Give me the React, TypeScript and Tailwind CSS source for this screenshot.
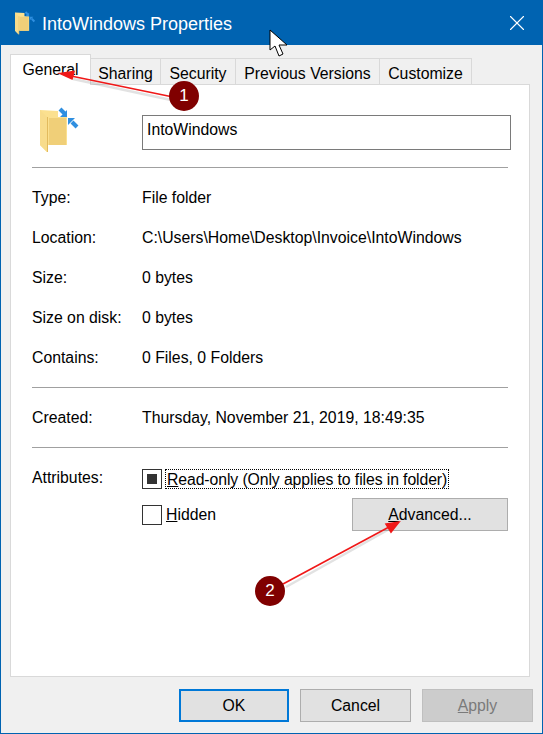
import { X } from "lucide-react";

const info = [
  ["Type:", "File folder"],
  ["Location:", "C:\\Users\\Home\\Desktop\\Invoice\\IntoWindows"],
  ["Size:", "0 bytes"],
  ["Size on disk:", "0 bytes"],
  ["Contains:", "0 Files, 0 Folders"],
];

function FolderIcon({ className }: { className: string }) {
  return (
    <svg viewBox="0 0 40 46" className={className}>
      <path d="M0 3 L18 4 L18 10 L27 10 L27 38 L7 38 L7 45 L0 38 Z" fill="#fbe08f" />
      <path d="M9 11 L26 11 L26 38 L9 38 Z" fill="#f0cf78" />
      <path d="M0 3 L7 10 L7 45 L0 38 Z" fill="#f8dc8c" />
      <path d="M7.5 10 L7.5 45" stroke="#e2bb5e" strokeWidth="1" />
      <path d="M20 2 L25 7" stroke="#2f8fe0" strokeWidth="4" />
      <path d="M27 10 L27 3 L20 10 Z" fill="#2f8fe0" />
      <path d="M32 15 L37 20" stroke="#2f8fe0" strokeWidth="4" />
      <path d="M28 11 L35 11 L28 18 Z" fill="#2f8fe0" />
    </svg>
  );
}

function Row({ label, value }: { label: string; value: string }) {
  return (
    <div className="flex h-10 items-center pt-[2px]">
      <div className="w-[110px]">{label}</div>
      <div>{value}</div>
    </div>
  );
}

function Tab({ label, className }: { label: string; className: string }) {
  return (
    <div className={`flex h-[26px] items-center justify-center border-t border-r border-[#d9d9d9] bg-[#f0f0f0] pt-[5px] ${className}`}>
      {label}
    </div>
  );
}

function Annotations() {
  return (
    <svg className="absolute inset-0 z-20" width="543" height="734" viewBox="0 0 543 734">
      <g stroke="#8a8a8a" strokeOpacity="0.25" fill="none" strokeWidth="2.5">
        <path d="M170 100 L72 79" />
        <path d="M285 587 L392 527" />
      </g>
      <g stroke="#f01818" strokeWidth="1.6" fill="#f01818">
        <path d="M172 97 L70 76" />
        <path d="M59 73.5 L73 71.5 L71 79 Z" />
        <path d="M282 584 L388 527" />
        <path d="M398 522 L390 532 L385 524 Z" />
      </g>
    </svg>
  );
}

function Badge({ n, className }: { n: number; className: string }) {
  return (
    <div className={`absolute z-20 flex size-[30px] items-center justify-center rounded-full bg-[#800000] text-[17px] text-white ${className}`}>
      {n}
    </div>
  );
}

export default function App() {
  return (
    <div
      className="relative flex h-[734px] w-[543px] flex-col overflow-hidden border-x border-b border-[#0063b1] bg-[#f0f0f0] text-[15.8px] text-black"
      style={{ fontFamily: '"Liberation Sans", Arial, sans-serif' }}
    >
      <div className="flex h-[45px] shrink-0 items-center bg-[#0063b1] text-white">
        <FolderIcon className="ml-[14px] h-[24px] w-[21px]" />
        <div className="ml-[6px] pt-[3px] text-[18px]">IntoWindows Properties</div>
        <X className="mr-[12px] ml-auto text-white" size={26} strokeWidth={1} />
      </div>

      <div className="relative z-10 mt-[10px] ml-[9px] flex h-[29px] items-end">
        <div className="-mb-px flex h-[31px] w-[81px] items-center justify-center border-x border-t border-[#d9d9d9] bg-white">
          General
        </div>
        <Tab label="Sharing" className="w-[70px]" />
        <Tab label="Security" className="w-[75px]" />
        <Tab label="Previous Versions" className="w-[144px]" />
        <Tab label="Customize" className="w-[92px]" />
      </div>

      <div className="mr-[12px] ml-[9px] flex h-[593px] flex-col border border-[#d9d9d9] bg-white px-[21px] pt-[30px]">
        <div className="flex h-[34px] items-start">
          <FolderIcon className="mt-[-8px] ml-[8px] h-[46px] w-[40px] shrink-0" />
          <div className="ml-[62px] flex h-[35px] w-[369px] shrink-0 items-center border border-[#7a7a7a] px-1 pb-[5px]">IntoWindows</div>
        </div>
        <div className="mt-[18px] h-px shrink-0 bg-[#a0a0a0]" />
        <div className="mt-[9px]">
          {info.map(([l, v]) => (
            <Row key={l} label={l} value={v} />
          ))}
        </div>
        <div className="mt-[10px] h-px shrink-0 bg-[#a0a0a0]" />
        <div className="mt-[9px]">
          <Row label="Created:" value="Thursday, November 21, 2019, 18:49:35" />
        </div>
        <div className="mt-[10px] h-px shrink-0 bg-[#a0a0a0]" />

        <div className="mt-[21px] flex">
          <div className="w-[110px] leading-[18px]">Attributes:</div>
          <div className="flex-1">
            <div className="flex h-5 items-center">
              <div className="flex size-5 items-center justify-center border border-[#333]">
                <div className="size-[10px] bg-[#333]" />
              </div>
              <div className="ml-[3px] flex h-5 items-center border border-dotted border-black pt-px pr-px pl-px leading-none tracking-[-0.1px]">
                <span><u>R</u>ead-only (Only applies to files in folder)</span>
              </div>
            </div>
            <div className="mt-[9px] flex h-[33px] items-center">
              <div className="size-5 border border-[#333]" />
              <div className="ml-[4px]"><u>H</u>idden</div>
              <div className="ml-auto flex h-[33px] w-[156px] items-center justify-center border border-[#adadad] bg-[#e1e1e1]">
                <span><u>A</u>dvanced...</span>
              </div>
            </div>
          </div>
        </div>
      </div>

      <div className="mt-[12px] mr-[9px] flex justify-end gap-[11px]">
        <div className="flex h-[33px] w-[110px] items-center justify-center border-2 border-[#0078d7] bg-[#e1e1e1]">OK</div>
        <div className="flex h-[33px] w-[111px] items-center justify-center border border-[#adadad] bg-[#e1e1e1]">Cancel</div>
        <div className="flex h-[33px] w-[111px] items-center justify-center border border-[#bfbfbf] bg-[#cccccc] text-[#7a7a7a]">
          <span><u>A</u>pply</span>
        </div>
      </div>

      <Annotations />
      <Badge n={1} className="top-[81px] left-[168px]" />
      <Badge n={2} className="top-[576px] left-[254px]" />

      <svg className="absolute top-[29px] left-[268px] z-20" width="22" height="30" viewBox="0 0 22 30">
        <path d="M1 1 L1 21 L6 17 L10 27 L14 25 L10 16 L18 16 Z" fill="#fff" stroke="#000" strokeWidth="1" />
      </svg>
    </div>
  );
}
